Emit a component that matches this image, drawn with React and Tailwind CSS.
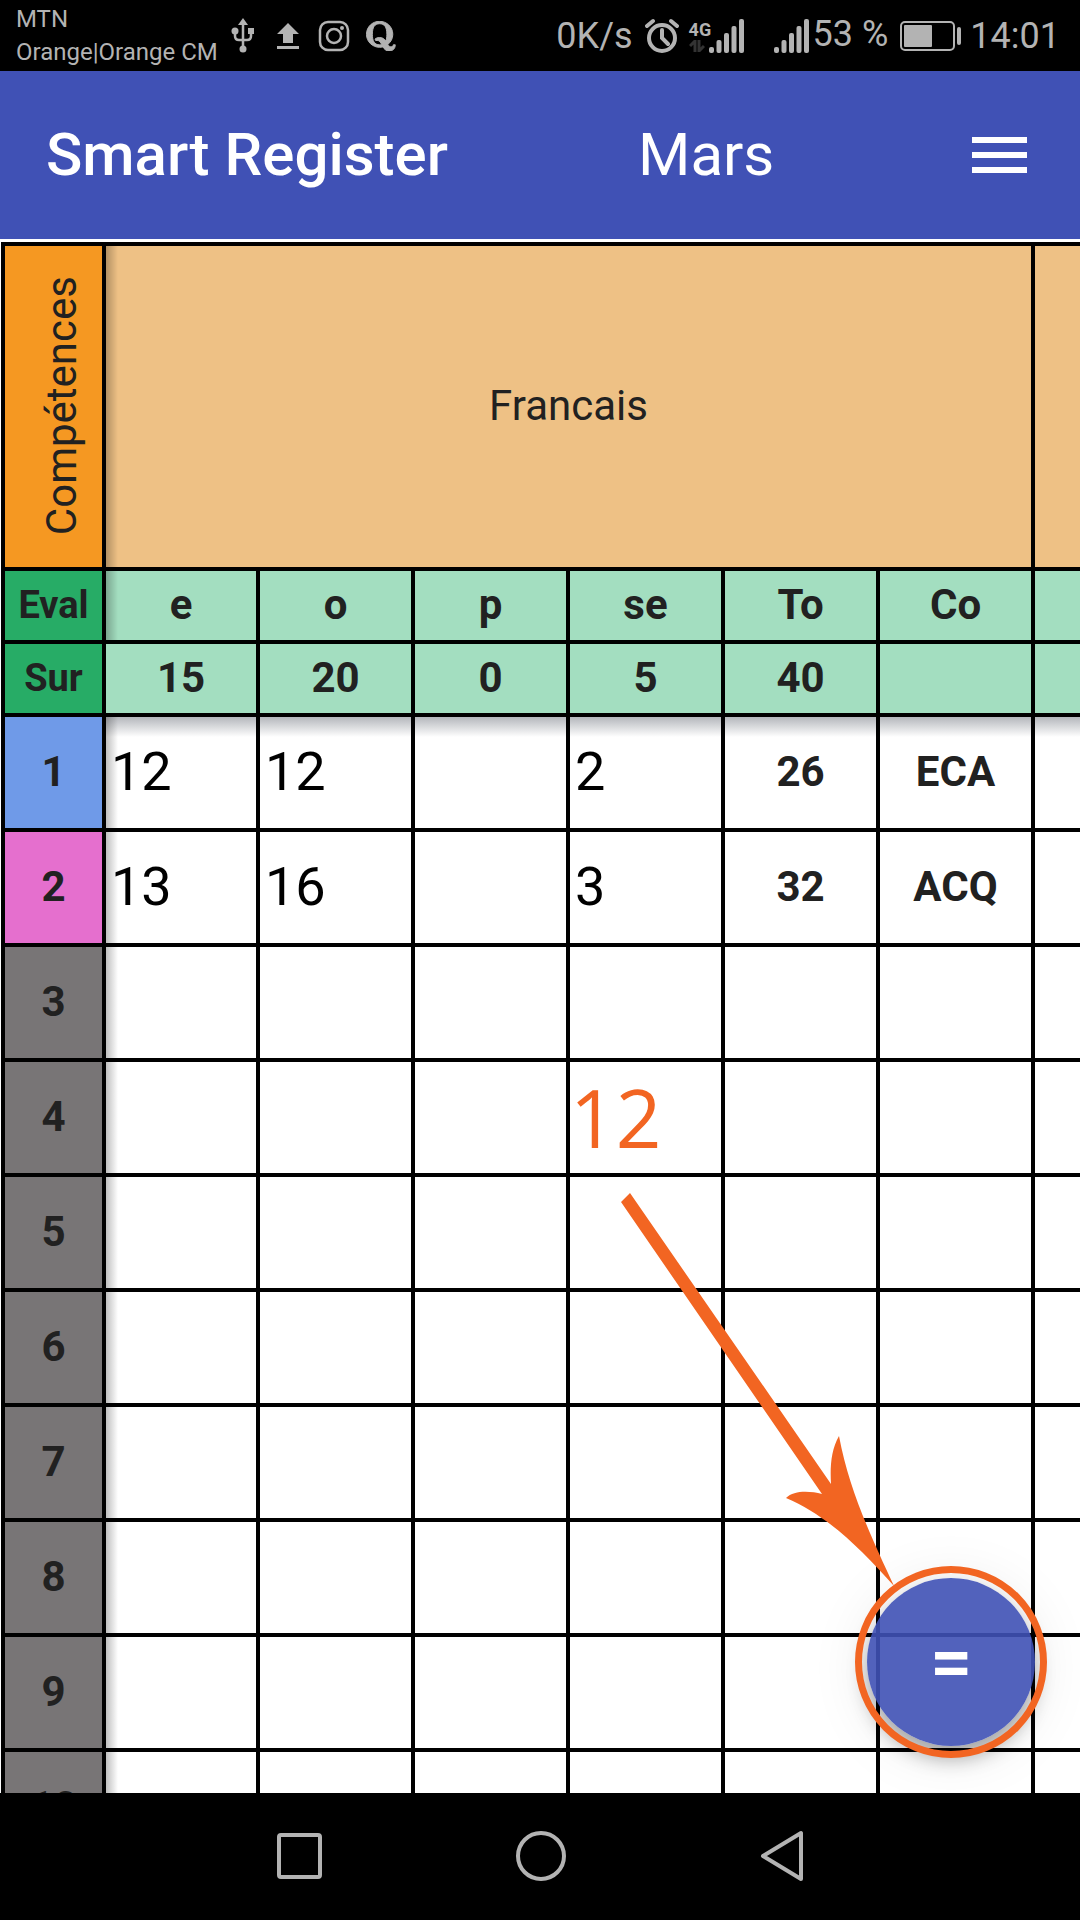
import React from "react";

const columns = ["e", "o", "p", "se", "To", "Co"];
const maxima = ["15", "20", "0", "5", "40", ""];

const rows = [
  { n: 1, tone: "bg-[#6f9ae8]", marks: ["12", "12", "", "2"], total: "26", grade: "ECA" },
  { n: 2, tone: "bg-[#e56fce]", marks: ["13", "16", "", "3"], total: "32", grade: "ACQ" },
  { n: 3 },
  { n: 4, marks: ["", "", "", "12"], highlight: 3 },
  { n: 5 },
  { n: 6 },
  { n: 7 },
  { n: 8 },
  { n: 9 },
  { n: 10 },
];

const border = "border-r-4 border-b-4 border-black";
const cell = `${border} p-0 pb-0.5`;
const sideShadow =
  "relative after:absolute after:-inset-y-1 after:left-full after:ml-1 after:w-3 after:bg-linear-to-r after:from-black/25 after:to-transparent after:content-['']";
const dropShadow =
  "relative before:absolute before:inset-x-0 before:top-full before:mt-1 before:h-5 before:bg-linear-to-b before:from-[#b4b7bc] before:to-transparent before:content-['']";

function SignalBars() {
  return (
    <svg width="35" height="34" viewBox="0 0 35 34" fill="currentColor" aria-hidden="true">
      <rect x="0" y="28" width="5" height="6" rx="2" />
      <rect x="7.500" y="21" width="5" height="13" rx="2" />
      <rect x="15" y="14" width="5" height="20" rx="2" />
      <rect x="22.500" y="7" width="5" height="27" rx="2" />
      <rect x="30" y="0" width="5" height="34" rx="2" />
    </svg>
  );
}

function StatusBar() {
  return (
    <div className="flex h-[71px] shrink-0 items-center bg-black pl-4 pr-5 text-4xl text-[#b3b3b3]">
      <div className="pt-px text-2xl leading-[33px]">
        <div>MTN</div>
        <div>Orange|Orange CM</div>
      </div>
      <div className="ml-3 flex items-center gap-4">
        <svg width="28" height="36" viewBox="-1 0 28 36" fill="none" stroke="currentColor" strokeWidth="2.500" aria-label="USB">
          <path d="M12 5v26M4 13v5q0 4 4 4h8q4 0 4-4v-5" />
          <path d="M12 0l5 7H7z" fill="currentColor" stroke="none" />
          <circle cx="4" cy="13" r="3.500" fill="currentColor" stroke="none" />
          <rect x="17" y="10" width="6" height="6" fill="currentColor" stroke="none" />
          <circle cx="12" cy="31" r="3.500" fill="currentColor" stroke="none" />
        </svg>
        <svg width="28" height="28" viewBox="0 0 28 28" fill="currentColor" aria-label="Upload">
          <path d="M14 1l11 11h-6v9H9v-9H3zM3 24h22v3H3z" />
        </svg>
        <svg width="32" height="32" viewBox="0 0 32 32" fill="none" stroke="currentColor" strokeWidth="2.500" aria-label="Instagram">
          <rect x="2" y="2" width="28" height="28" rx="8" />
          <circle cx="16" cy="16" r="7" />
          <circle cx="24" cy="8" r="2" fill="currentColor" stroke="none" />
        </svg>
        <svg width="30" height="30" viewBox="1.500 2 21.500 21.500" fill="currentColor" stroke="currentColor" strokeWidth="0.700" aria-label="Quora">
          <path d="M12.730 18.800c-.740-1.450-1.600-2.910-3.290-2.910-.320 0-.640.050-.930.190l-.580-1.150c.710-.610 1.850-1.090 3.320-1.090 2.290 0 3.470 1.100 4.400 2.510.550-1.200.810-2.810.810-4.820 0-5.010-1.570-7.580-5.230-7.580-3.610 0-5.170 2.570-5.170 7.580 0 4.980 1.560 7.530 5.170 7.530.570 0 1.040-.080 1.500-.260m.900 1.760a9.900 9.900 0 0 1-2.430.300C6.460 20.860 1.830 17.070 1.830 11.530 1.830 5.940 6.460 2.200 11.200 2.200c4.820 0 9.500 3.720 9.500 9.330 0 3.120-1.460 5.660-3.580 7.300.680 1.030 1.390 1.710 2.380 1.710 1.070 0 1.510-.830 1.580-1.480h1.390c.080.860-.350 4.450-4.260 4.450-2.370 0-3.620-1.370-4.580-2.950" />
        </svg>
      </div>
      <div className="ml-auto flex items-center">
        <span>0K/s</span>
        <svg className="ml-3" width="34" height="36" viewBox="0 0 34 36" fill="none" stroke="currentColor" strokeWidth="4" aria-label="Alarm">
          <circle cx="17" cy="20" r="13" />
          <path d="M17 12v8l6 6M2 8l6-5M32 8l-6-5" strokeLinecap="round" />
        </svg>
        <div className="ml-2.5 flex w-5 flex-col text-lg leading-5 font-bold">
          <span>4G</span>
          <svg width="16" height="12" viewBox="0 0 16 12" fill="none" stroke="#333" strokeWidth="3" aria-hidden="true">
            <path d="M6 12V1L1 6M10 0v11l5-5" />
          </svg>
        </div>
        <SignalBars />
        <span className="w-[30px]" />
        <SignalBars />
        <span className="ml-1 pb-1">53 %</span>
        <svg className="ml-3" width="62" height="30" viewBox="0 0 62 30" aria-label="Battery">
          <rect x="1" y="1" width="53" height="28" rx="4" fill="none" stroke="currentColor" strokeWidth="2" />
          <rect x="4" y="4" width="28" height="22" rx="1" fill="currentColor" />
          <rect x="57" y="6" width="4" height="18" rx="2" fill="currentColor" />
        </svg>
        <span className="ml-2">14:01</span>
      </div>
    </div>
  );
}

function AppBar() {
  return (
    <header className="flex h-[168px] shrink-0 items-center bg-[#4051b5] pl-[46px] pr-[53px] text-6xl text-white">
      <h1 className="flex-1 font-medium">Smart Register</h1>
      <span className="w-[334px]">Mars</span>
      <button aria-label="Menu" className="flex w-[55px] flex-col gap-[9px]">
        <span className="h-1.5 w-full bg-white" />
        <span className="h-1.5 w-full bg-white" />
        <span className="h-1.5 w-full bg-white" />
      </button>
    </header>
  );
}

function MarksTable() {
  return (
    <table className="ml-px w-[1189px] table-fixed border-separate border-spacing-0 border-t-4 border-l-4 border-black text-[42px] leading-[50px] text-[#212121]">
      <colgroup>
        <col className="w-[101px]" />
        <col className="w-[154px]" />
        {["o", "p", "se", "To", "Co", "next"].map((c) => (
          <col key={c} className="w-[155px]" />
        ))}
      </colgroup>
      <thead>
        <tr className="h-[325px]">
          <th scope="row" className={`${cell} ${sideShadow} bg-[#f59822] font-normal`}>
            <div className="flex justify-start pl-8">
              <span className="w-[50px] rotate-180 [writing-mode:vertical-rl]">Compétences</span>
            </div>
          </th>
          <th colSpan={6} scope="colgroup" className={`${cell} bg-[#eec185] font-normal`}>Francais</th>
          <th className={`${cell} bg-[#eec185]`} />
        </tr>
        <tr className="h-[73px]">
          <th scope="row" className={`${cell} ${sideShadow} bg-[#27ac66] text-[38px] font-bold`}>Eval</th>
          {columns.map((c) => (
            <th key={c} scope="col" className={`${cell} bg-[#a3dec0] font-bold`}>{c}</th>
          ))}
          <th className={`${cell} bg-[#a3dec0]`} />
        </tr>
        <tr className="h-[73px]">
          <th scope="row" className={`${cell} ${sideShadow} bg-[#27ac66] text-[38px] font-bold`}>Sur</th>
          {maxima.map((m, i) => (
            <th key={columns[i]} className={`${cell} ${dropShadow} bg-[#a3dec0] font-bold`}>{m}</th>
          ))}
          <th className={`${cell} ${dropShadow} bg-[#a3dec0]`} />
        </tr>
      </thead>
      <tbody>
        {rows.map((r) => (
          <tr key={r.n} className="h-[115px]">
            <th scope="row" className={`${cell} ${sideShadow} ${r.tone || "bg-[#787576]"} font-bold`}>{r.n}</th>
            {[0, 1, 2, 3].map((i) => (
              <td key={i} className={`${border} p-0`}>
                <input
                  aria-label={`${columns[i]} ${r.n}`}
                  defaultValue={r.marks ? r.marks[i] : ""}
                  className={
                    r.highlight === i
                      ? "relative block h-[111px] w-full bg-transparent pb-0.5 font-['Open_Sans',sans-serif] text-[80px] font-medium text-[#f26522] outline-none"
                      : "relative block h-[111px] w-full bg-transparent pb-0.5 pl-[5px] text-[54px] text-black outline-none"
                  }
                />
              </td>
            ))}
            <td className={`${cell} text-center font-bold`}>{r.total}</td>
            <td className={`${cell} text-center font-bold`}>{r.grade}</td>
            <td className={cell} />
          </tr>
        ))}
      </tbody>
    </table>
  );
}

function CalculateButton() {
  return (
    <>
      <div className="absolute right-[33px] bottom-[35px] size-48 rounded-full p-3 after:pointer-events-none after:absolute after:inset-0 after:rounded-full after:border-[7px] after:border-[#f26522] after:content-['']">
        <button
          aria-label="Calculate"
          className="flex size-full items-center justify-center rounded-full bg-[#3f51b5]/90 text-[76px] leading-none font-medium text-white shadow-[0_12px_20px_rgba(0,0,0,0.32),0_6px_60px_rgba(0,0,0,0.1)]"
        >
          =
        </button>
      </div>
      <svg
        className="pointer-events-none absolute right-[186px] bottom-[207px]"
        width="273"
        height="393"
        viewBox="621 1193 273 393"
        fill="#f26522"
        aria-hidden="true"
      >
        <path d="M621 1202L630 1193L831 1484C830 1467 831 1450 839 1436C849 1488 867 1528 894 1586C860 1548 828 1516 786 1498C794 1490 810 1491 822 1494Z" />
      </svg>
    </>
  );
}

function NavBar() {
  return (
    <nav className="flex h-[127px] shrink-0 items-center justify-center gap-[190px] bg-black pb-0.5 pl-0.5 text-[#b3b3b3]">
      <button aria-label="Recents">
        <svg width="52" height="52" viewBox="0 0 52 52" fill="none" stroke="currentColor" strokeWidth="4">
          <rect x="6" y="5" width="41" height="42" rx="2" />
        </svg>
      </button>
      <button aria-label="Home">
        <svg width="52" height="52" viewBox="0 0 52 52" fill="none" stroke="currentColor" strokeWidth="4">
          <circle cx="26" cy="26" r="23" />
        </svg>
      </button>
      <button aria-label="Back">
        <svg width="52" height="52" viewBox="0 0 52 52" fill="none" stroke="currentColor" strokeWidth="4" strokeLinejoin="round">
          <path d="M44 3v46L6 26z" />
        </svg>
      </button>
    </nav>
  );
}

export default function App() {
  return (
    <div className="flex h-screen flex-col overflow-hidden bg-white font-[Roboto,sans-serif]">
      <StatusBar />
      <AppBar />
      <main className="relative min-h-0 flex-1 overflow-hidden pt-[3px]">
        <MarksTable />
        <CalculateButton />
      </main>
      <NavBar />
    </div>
  );
}
